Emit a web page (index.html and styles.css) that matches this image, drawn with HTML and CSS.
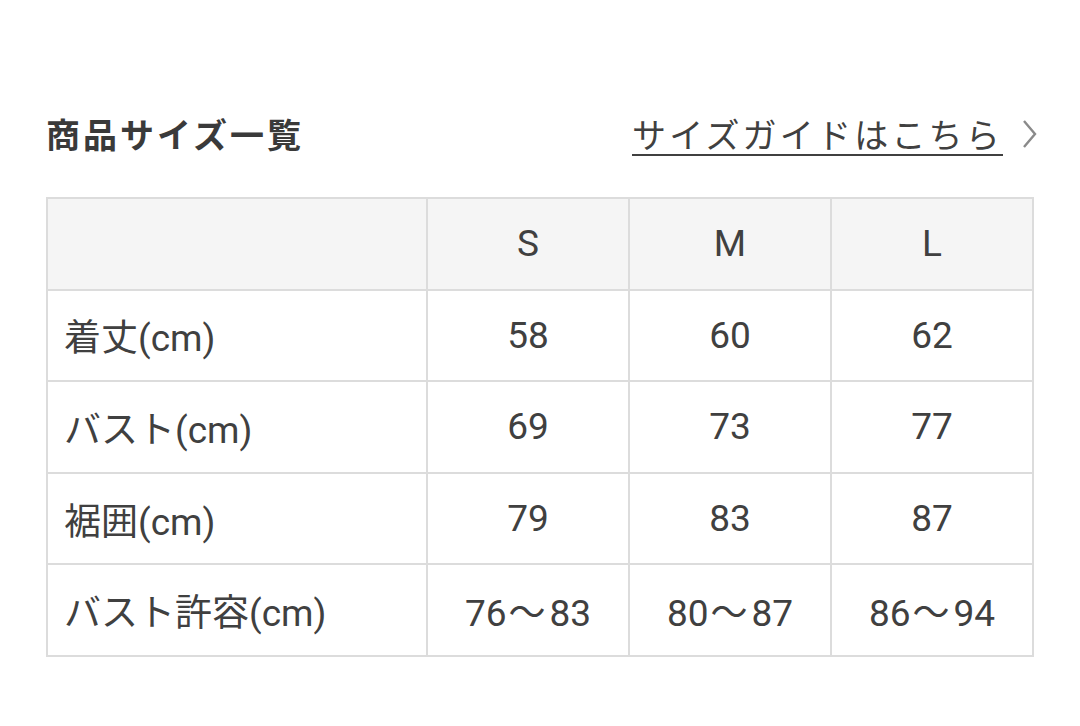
FILE: index.html
```html
<!DOCTYPE html>
<html lang="ja">
<head>
<meta charset="utf-8">
<link rel="stylesheet" href="styles.css">
</head>
<body>
<div class="page">
  <div class="head">
    <h2 class="title">商品サイズ一覧</h2>
    <a class="guide" href="#"><span class="guide-text">サイズガイドはこちら</span>
      <svg class="chev" width="16" height="30" viewBox="0 0 16 30"><path d="M2 2 L13 15 L2 28" fill="none" stroke="#8a8a8a" stroke-width="2.4"/></svg>
    </a>
  </div>
  <table class="sizes">
    <thead>
      <tr><th class="label"></th><th>S</th><th>M</th><th>L</th></tr>
    </thead>
    <tbody>
      <tr><td class="label">着丈(cm)</td><td>58</td><td>60</td><td>62</td></tr>
      <tr><td class="label">バスト(cm)</td><td>69</td><td>73</td><td>77</td></tr>
      <tr><td class="label">裾囲(cm)</td><td>79</td><td>83</td><td>87</td></tr>
      <tr><td class="label">バスト許容(cm)</td><td>76<span class="tilde">～</span>83</td><td>80<span class="tilde">～</span>87</td><td>86<span class="tilde">～</span>94</td></tr>
    </tbody>
  </table>
</div>
</body>
</html>
```
FILE: styles.css
```css
html, body {
  margin: 0;
  padding: 0;
  background: #fff;
}
body {
  font-family: Roboto, "Noto Sans CJK JP", sans-serif;
  color: #404040;
}
.page {
  width: 988px;
  padding: 106px 0 0 46px;
}
.head {
  display: flex;
  align-items: center;
  justify-content: space-between;
  height: 56px;
  margin-bottom: 35px;
}
.title {
  margin: 0;
  font-family: "Noto Sans CJK JP", sans-serif;
  font-weight: 700;
  font-size: 34px;
  letter-spacing: 3px;
  color: #3a3a3a;
  line-height: 1;
}
.guide {
  display: flex;
  align-items: center;
  gap: 22px;
  color: #404040;
  text-decoration: none;
}
.guide-text {
  font-family: "Noto Sans CJK JP", sans-serif;
  font-size: 34px;
  line-height: 1;
  text-decoration: underline;
  text-decoration-thickness: 2px;
  text-underline-offset: 6px;
  letter-spacing: 3.2px;
  margin-right: -3px;
}
.chev {
  display: block;
  margin-right: -4px;
}
.sizes {
  width: 988px;
  border-collapse: collapse;
  table-layout: fixed;
  font-size: 37px;
}
.sizes th, .sizes td {
  border: 2px solid #dcdcdc;
  height: 89.6px;
  padding: 0;
  text-align: center;
  font-weight: 400;
  color: #404040;
}
.sizes thead th {
  background: #f5f5f5;
}
.sizes .label {
  width: 380px;
  text-align: left;
  padding-left: 16px;
  box-sizing: border-box;
}
.tilde {
  letter-spacing: 4px;
  margin-left: 2px;
}
```
